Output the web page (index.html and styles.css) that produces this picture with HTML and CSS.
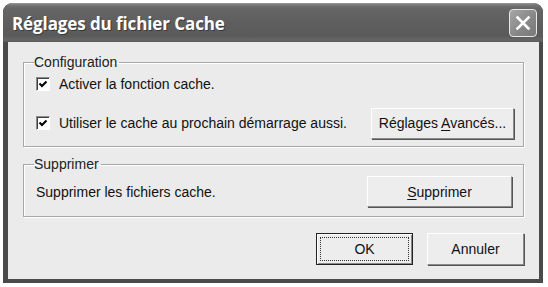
FILE: index.html
```html
<!DOCTYPE html>
<html lang="fr">
<head>
<meta charset="utf-8">
<title>Réglages du fichier Cache</title>
<link rel="stylesheet" href="styles.css">
</head>
<body>
<div class="window">
  <div class="titlebar">
    <span class="title">Réglages du fichier Cache</span>
    <button class="close" aria-label="Fermer">
      <svg width="16" height="16" viewBox="0 0 16 16"><path d="M2.5 2.5 L13.5 13.5 M13.5 2.5 L2.5 13.5" stroke="#fff" stroke-width="2.6" stroke-linecap="square"/></svg>
    </button>
  </div>
  <div class="client">
    <fieldset class="group group-config">
      <legend>Configuration</legend>
      <div class="row row-first">
        <span class="check"><svg width="10" height="10" viewBox="0 0 10 10"><path d="M1.5 4.5 L4 7 L8.5 2.5" stroke="#000" stroke-width="2" fill="none"/></svg></span>
        <span class="label">Activer la fonction cache.</span>
      </div>
      <div class="row row-second">
        <span class="check"><svg width="10" height="10" viewBox="0 0 10 10"><path d="M1.5 4.5 L4 7 L8.5 2.5" stroke="#000" stroke-width="2" fill="none"/></svg></span>
        <span class="label">Utiliser le cache au prochain démarrage aussi.</span>
        <button class="btn btn-advanced"><span>Réglages <u>A</u>vancés...</span></button>
      </div>
    </fieldset>
    <fieldset class="group group-delete">
      <legend>Supprimer</legend>
      <div class="row row-delete">
        <span class="label plain">Supprimer les fichiers cache.</span>
        <button class="btn btn-delete"><span><u>S</u>upprimer</span></button>
      </div>
    </fieldset>
    <div class="actions">
      <button class="btn btn-ok"><span class="focus">OK</span></button>
      <button class="btn btn-cancel"><span>Annuler</span></button>
    </div>
  </div>
</div>
</body>
</html>
```
FILE: styles.css
```css
html, body {
  margin: 0;
  padding: 0;
  background: #fff;
}
body {
  font-family: "Liberation Sans", Arial, sans-serif;
  font-size: 14px;
  color: #111;
}
.window {
  margin: 3px 0 0 3px;
  width: 540px;
  height: 280px;
  background: #4a4a4a;
  border-radius: 9px 9px 0 0;
  display: flex;
  flex-direction: column;
  overflow: hidden;
}
.titlebar {
  height: 39px;
  flex: none;
  display: flex;
  align-items: center;
  justify-content: space-between;
  padding: 0 6px 0 9px;
  background: linear-gradient(to bottom, #9a9a9a 0px, #767676 2px, #666 5px, #5e5e5e 20px, #5a5a5a 33px, #666 37px, #5a5a5a 39px);
  border-radius: 9px 9px 0 0;
}
.title {
  font-family: "Open Sans", "DejaVu Sans", sans-serif;
  font-weight: 700;
  font-size: 17px;
  color: #fff;
  letter-spacing: -0.1px;
  text-shadow: 1px 1px 0 #3a3a3a;
  margin-top: 1px;
}
.close {
  width: 28px;
  height: 28px;
  padding: 0;
  border: 1px solid #e8e8e8;
  border-radius: 4px;
  background: linear-gradient(135deg, #a6a6a6, #858585 60%, #7a7a7a);
  display: flex;
  align-items: center;
  justify-content: center;
  margin-top: 1px;
}
.client {
  flex: 1;
  margin: 0 4px 4px 5px;
  background: #ebebeb;
  display: flex;
  flex-direction: column;
  padding: 12px 15px 0 15px;
}
.group {
  margin: 0;
  padding: 0 9px 0 11px;
  border: 1px solid #a7a7a7;
  box-shadow: 1px 1px 0 #fff, inset 1px 1px 0 #fff;
  min-width: 0;
}
.group legend {
  padding: 0 2px 0 0;
  margin-left: -1px;
  line-height: 16px;
  font-size: 14px;
  color: #222;
}
.group-config {
  padding-bottom: 7px;
}
.group-delete {
  margin-top: 9px;
  padding-bottom: 9px;
}
.row {
  display: flex;
  align-items: center;
}
.row-first {
  height: 16px;
  margin-top: 6px;
}
.row-second {
  height: 32px;
  margin-top: 15px;
}
.row-delete {
  height: 31px;
  margin-top: 4px;
}
.check {
  width: 14px;
  height: 14px;
  box-sizing: border-box;
  background: #fff;
  border: 1px solid;
  border-color: #8c8c8c #fff #fff #8c8c8c;
  box-shadow: inset 1px 1px 0 #404040;
  display: flex;
  align-items: center;
  justify-content: center;
  flex: none;
  margin-left: 1px;
}
.label {
  margin-left: 9px;
  flex: 1;
  color: #111;
}
.label.plain {
  margin-left: 1px;
}
.btn {
  font-family: "Liberation Sans", Arial, sans-serif;
  font-size: 14px;
  color: #111;
  background: #ededed;
  border: 1px solid;
  border-color: #fff #8a8a8a #8a8a8a #fff;
  box-shadow: 1px 1px 0 #555;
  padding: 0;
  display: flex;
  align-items: center;
  justify-content: center;
  flex: none;
}
.btn u {
  text-decoration-thickness: 1px;
  text-underline-offset: 2px;
}
.btn-advanced {
  width: 143px;
  height: 31px;
}
.btn-delete {
  width: 145px;
  height: 31px;
  margin-right: 2px;
}
.actions {
  display: flex;
  justify-content: flex-end;
  gap: 14px;
  margin-top: 16px;
}
.btn-ok,
.btn-cancel {
  width: 97px;
  height: 32px;
}
.btn-ok {
  border: 1px solid #222;
  box-shadow: inset 1px 1px 0 #fff, inset -1px -1px 0 #8a8a8a;
  padding: 3px;
}
.focus {
  display: flex;
  align-items: center;
  justify-content: center;
  width: 100%;
  height: 100%;
  border: 1px dotted #333;
  box-sizing: border-box;
}
```
